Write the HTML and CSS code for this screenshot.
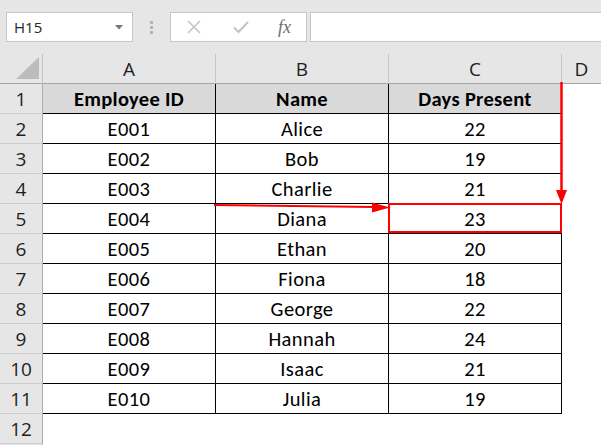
FILE: index.html
```html
<!DOCTYPE html>
<html>
<head>
<meta charset="utf-8">
<link rel="stylesheet" href="styles.css">
</head>
<body>
<div class="app">
  <div class="toolbar">
    <div class="namebox">
      <span class="ref">H15</span>
      <svg class="caret" width="8" height="5" viewBox="0 0 8 5"><path d="M0 0H8L4 4.5Z" fill="#777"/></svg>
    </div>
    <div class="grip"><i></i><i></i><i></i></div>
    <div class="fxbox">
      <svg class="ico" width="16" height="16" viewBox="0 0 16 16"><path d="M2 2L14 14M14 2L2 14" stroke="#c4c4c4" stroke-width="1.6" fill="none"/></svg>
      <svg class="ico" width="18" height="16" viewBox="0 0 18 16"><path d="M2 8.5L6.5 13L16 3" stroke="#c4c4c4" stroke-width="2" fill="none"/></svg>
      <span class="fx">fx</span>
    </div>
    <div class="formula"></div>
  </div>

  <div class="sheet">
    <div class="corner"><svg width="23" height="22" viewBox="0 0 23 22"><path d="M23 0V22H0Z" fill="#bcbcbc"/></svg></div>
    <div class="colh">A</div><div class="colh">B</div><div class="colh">C</div><div class="colh last">D</div>

    <div class="rowh">1</div><div class="cell head">Employee ID</div><div class="cell head">Name</div><div class="cell head">Days Present</div><div class="blank"></div>
    <div class="rowh">2</div><div class="cell">E001</div><div class="cell">Alice</div><div class="cell">22</div><div class="blank"></div>
    <div class="rowh">3</div><div class="cell">E002</div><div class="cell">Bob</div><div class="cell">19</div><div class="blank"></div>
    <div class="rowh">4</div><div class="cell">E003</div><div class="cell">Charlie</div><div class="cell">21</div><div class="blank"></div>
    <div class="rowh">5</div><div class="cell">E004</div><div class="cell">Diana</div><div class="cell">23</div><div class="blank"></div>
    <div class="rowh">6</div><div class="cell">E005</div><div class="cell">Ethan</div><div class="cell">20</div><div class="blank"></div>
    <div class="rowh">7</div><div class="cell">E006</div><div class="cell">Fiona</div><div class="cell">18</div><div class="blank"></div>
    <div class="rowh">8</div><div class="cell">E007</div><div class="cell">George</div><div class="cell">22</div><div class="blank"></div>
    <div class="rowh">9</div><div class="cell">E008</div><div class="cell">Hannah</div><div class="cell">24</div><div class="blank"></div>
    <div class="rowh">10</div><div class="cell">E009</div><div class="cell">Isaac</div><div class="cell">21</div><div class="blank"></div>
    <div class="rowh">11</div><div class="cell">E010</div><div class="cell">Julia</div><div class="cell">19</div><div class="blank"></div>
    <div class="rowh">12</div><div class="empty"></div><div class="empty"></div><div class="empty"></div><div class="blank"></div>
    <div class="rowh"></div><div class="empty"></div><div class="empty"></div><div class="empty"></div><div class="blank"></div>
  </div>

  <svg class="marks" width="601" height="445" viewBox="0 0 601 445">
    <rect x="389" y="204" width="172" height="28" fill="none" stroke="#ff0000" stroke-width="2"/>
    <path d="M561.5 82V192" stroke="#ff0000" stroke-width="2.5" fill="none"/>
    <path d="M556 190H567L561.5 204Z" fill="#ff0000"/>
    <path d="M214 205L374 207" stroke="#ff0000" stroke-width="2" fill="none"/>
    <path d="M372 202.5L390 207.5L372 212.5Z" fill="#ff0000"/>
  </svg>
</div>
</body>
</html>
```

FILE: styles.css
```css
* { box-sizing: border-box; }
html, body { margin: 0; padding: 0; }
body {
  background: #ffffff;
  width: 601px;
  height: 445px;
  overflow: hidden;
  font-family: "Open Sans", "DejaVu Sans", sans-serif;
}
.app {
  position: relative;
  width: 601px;
  height: 445px;
  overflow: hidden;
  background: #ffffff;
}
.toolbar {
  height: 54px;
  background: #e6e6e6;
  display: flex;
  align-items: flex-start;
  padding: 12px 0 0 6px;
}
.toolbar > * { flex: none; }
.namebox {
  width: 127px;
  height: 30px;
  background: #fff;
  border: 1px solid #c6c6c6;
  display: flex;
  align-items: center;
  justify-content: space-between;
  padding: 0 9px 0 7px;
}
.ref {
  font-size: 15px;
  color: #262626;
}
.caret { margin-top: 1px; }
.grip {
  width: 37px;
  height: 30px;
  display: flex;
  flex-direction: column;
  align-items: center;
  justify-content: center;
  gap: 2px;
}
.grip i {
  display: block;
  width: 3px;
  height: 3px;
  background: #b4b4b4;
}
.fxbox {
  width: 137px;
  height: 30px;
  background: #fff;
  border: 1px solid #c6c6c6;
  display: flex;
  align-items: center;
  padding: 0 0 0 15px;
  gap: 30px;
}
.fx {
  font-family: "Liberation Serif", "DejaVu Serif", serif;
  font-style: italic;
  font-size: 18px;
  color: #6e6e6e;
  margin-left: -2px;
}
.formula {
  width: 320px;
  height: 30px;
  margin-left: 3px;
  background: #fff;
  border: 1px solid #c6c6c6;
}
.sheet {
  display: grid;
  grid-template-columns: 43px 173px 173px 173px 1fr;
  grid-auto-rows: 30px;
}
.corner {
  background: #e6e6e6;
  border-right: 1px solid #c6c6c6;
  border-bottom: 1px solid #a5a5a5;
  display: flex;
  align-items: flex-end;
  justify-content: flex-end;
  padding: 0 3px 4px 0;
}
.colh {
  background: #e6e6e6;
  border-right: 1px solid #c6c6c6;
  border-bottom: 1px solid #a5a5a5;
  display: flex;
  align-items: center;
  justify-content: center;
  font-size: 19px;
  color: #1e1e1e;
  padding-top: 1px;
}
.colh.last { border-right: none; }
.rowh {
  background: #e6e6e6;
  border-right: 1px solid #ababab;
  border-bottom: 1px solid #cdcdcd;
  display: flex;
  align-items: center;
  justify-content: center;
  font-size: 19px;
  color: #1e1e1e;
}
.cell {
  border-right: 1px solid #000;
  border-bottom: 1px solid #000;
  display: flex;
  align-items: center;
  justify-content: center;
  font-family: "Carlito", "Lato", "Liberation Sans", sans-serif;
  font-size: 20.5px;
  letter-spacing: 0.4px;
  color: #000;
  padding-top: 1px;
}
.cell.head {
  background: #d9d9d9;
  font-weight: bold;
  letter-spacing: 0.3px;
}
.empty, .blank { background: #fff; }
.marks {
  position: absolute;
  left: 0;
  top: 0;
  pointer-events: none;
}
```
